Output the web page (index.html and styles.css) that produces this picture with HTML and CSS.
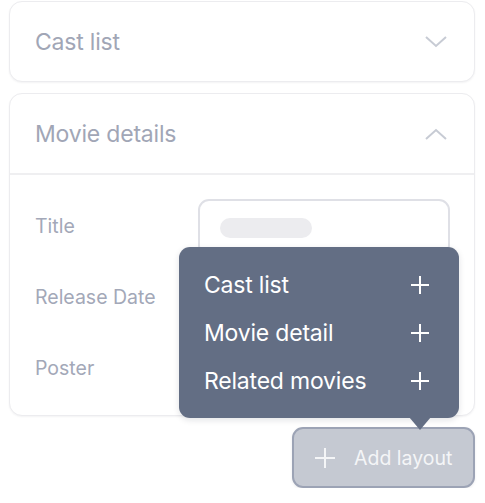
FILE: index.html
```html
<!DOCTYPE html>
<html>
<head>
<meta charset="utf-8">
<link rel="stylesheet" href="styles.css">
</head>
<body>
<div class="page">
  <section class="card">
    <div class="card-head">
      <span class="card-title">Cast list</span>
      <svg class="chev" width="22" height="12" viewBox="0 0 22 12"><path d="M1 1 L11 10 L21 1" fill="none" stroke="currentColor" stroke-width="2"/></svg>
    </div>
  </section>
  <section class="card">
    <div class="card-head">
      <span class="card-title">Movie details</span>
      <svg class="chev" width="22" height="12" viewBox="0 0 22 12"><path d="M1 11 L11 2 L21 11" fill="none" stroke="currentColor" stroke-width="2"/></svg>
    </div>
    <div class="card-body">
      <div class="row">
        <span class="label">Title</span>
        <div class="input"><span class="skeleton"></span></div>
      </div>
      <div class="row">
        <span class="label">Release Date</span>
        <div class="input"></div>
      </div>
      <div class="row">
        <span class="label">Poster</span>
        <div class="input"></div>
      </div>
    </div>
  </section>
  <div class="actions">
    <div class="add-wrap">
      <div class="menu">
        <div class="menu-item"><span>Cast list</span><svg class="plus" width="20" height="20" viewBox="0 0 20 20"><path d="M10 1 V19 M1 10 H19" stroke="currentColor" stroke-width="2"/></svg></div>
        <div class="menu-item"><span>Movie detail</span><svg class="plus" width="20" height="20" viewBox="0 0 20 20"><path d="M10 1 V19 M1 10 H19" stroke="currentColor" stroke-width="2"/></svg></div>
        <div class="menu-item"><span>Related movies</span><svg class="plus" width="20" height="20" viewBox="0 0 20 20"><path d="M10 1 V19 M1 10 H19" stroke="currentColor" stroke-width="2"/></svg></div>
        <span class="menu-arrow"></span>
      </div>
      <button class="add-btn"><svg class="plus" width="22" height="22" viewBox="0 0 22 22"><path d="M11 1 V21 M1 11 H21" stroke="currentColor" stroke-width="2"/></svg><span>Add layout</span></button>
    </div>
  </div>
</div>
</body>
</html>
```

FILE: styles.css
```css
* { box-sizing: border-box; }
html, body { margin: 0; background: #ffffff; }
body { font-family: Inter, "Noto Sans", sans-serif; }
.page {
  width: 485px;
  padding: 1px 10px 0 9px;
  display: flex;
  flex-direction: column;
  gap: 11px;
}
.card {
  border: 1px solid #ececef;
  border-radius: 13px;
  background: #fff;
  box-shadow: 0 1px 2px rgba(20, 25, 40, 0.05);
}
.card-head {
  height: 79px;
  display: flex;
  align-items: center;
  justify-content: space-between;
  padding: 0 27px 0 25px;
}
.card-title {
  font-size: 23px;
  color: #a1a6b6;
  letter-spacing: -0.2px;
}
.chev { color: #c7cbd4; }
.card-body {
  border-top: 2px solid #efeff1;
  padding: 24px 24px 16px 25px;
  display: flex;
  flex-direction: column;
  gap: 13px;
}
.row {
  display: flex;
  align-items: center;
  height: 58px;
}
.label {
  width: 163px;
  font-size: 19.5px;
  color: #a3a8b8;
  margin-top: -4px;
}
.input {
  flex: 1;
  height: 58px;
  border: 2px solid #dfe0e6;
  border-radius: 11px;
  display: flex;
  align-items: center;
  padding-left: 20px;
}
.skeleton {
  width: 92px;
  height: 20px;
  border-radius: 10px;
  background: #ececef;
}
.actions {
  display: flex;
  justify-content: flex-end;
}
.add-wrap { position: relative; }
.add-btn {
  width: 183px;
  height: 61px;
  border: 2px solid #9ca3b5;
  border-radius: 11px;
  background: #c5c9d2;
  color: #f4f5f7;
  display: flex;
  align-items: center;
  gap: 18px;
  padding: 0 0 0 20px;
  font-family: inherit;
  font-size: 19.5px;
  box-shadow: 0 1px 3px rgba(20, 25, 40, 0.08);
}
.menu {
  position: absolute;
  right: 16px;
  bottom: 70px;
  width: 280px;
  height: 171px;
  background: #636e84;
  border-radius: 11px;
  padding: 14px 29px 0 25px;
  display: flex;
  flex-direction: column;
  gap: 0;
  box-shadow: 0 2px 6px rgba(20, 25, 40, 0.12);
  z-index: 2;
}
.menu-item {
  height: 48px;
  display: flex;
  align-items: center;
  justify-content: space-between;
  color: #ffffff;
  font-size: 23px;
  letter-spacing: -0.2px;
}
.menu-item .plus { color: #fff; }
.menu-arrow {
  position: absolute;
  right: 28px;
  bottom: -12px;
  width: 0;
  height: 0;
  border-left: 11px solid transparent;
  border-right: 11px solid transparent;
  border-top: 13px solid #636e84;
}
```
